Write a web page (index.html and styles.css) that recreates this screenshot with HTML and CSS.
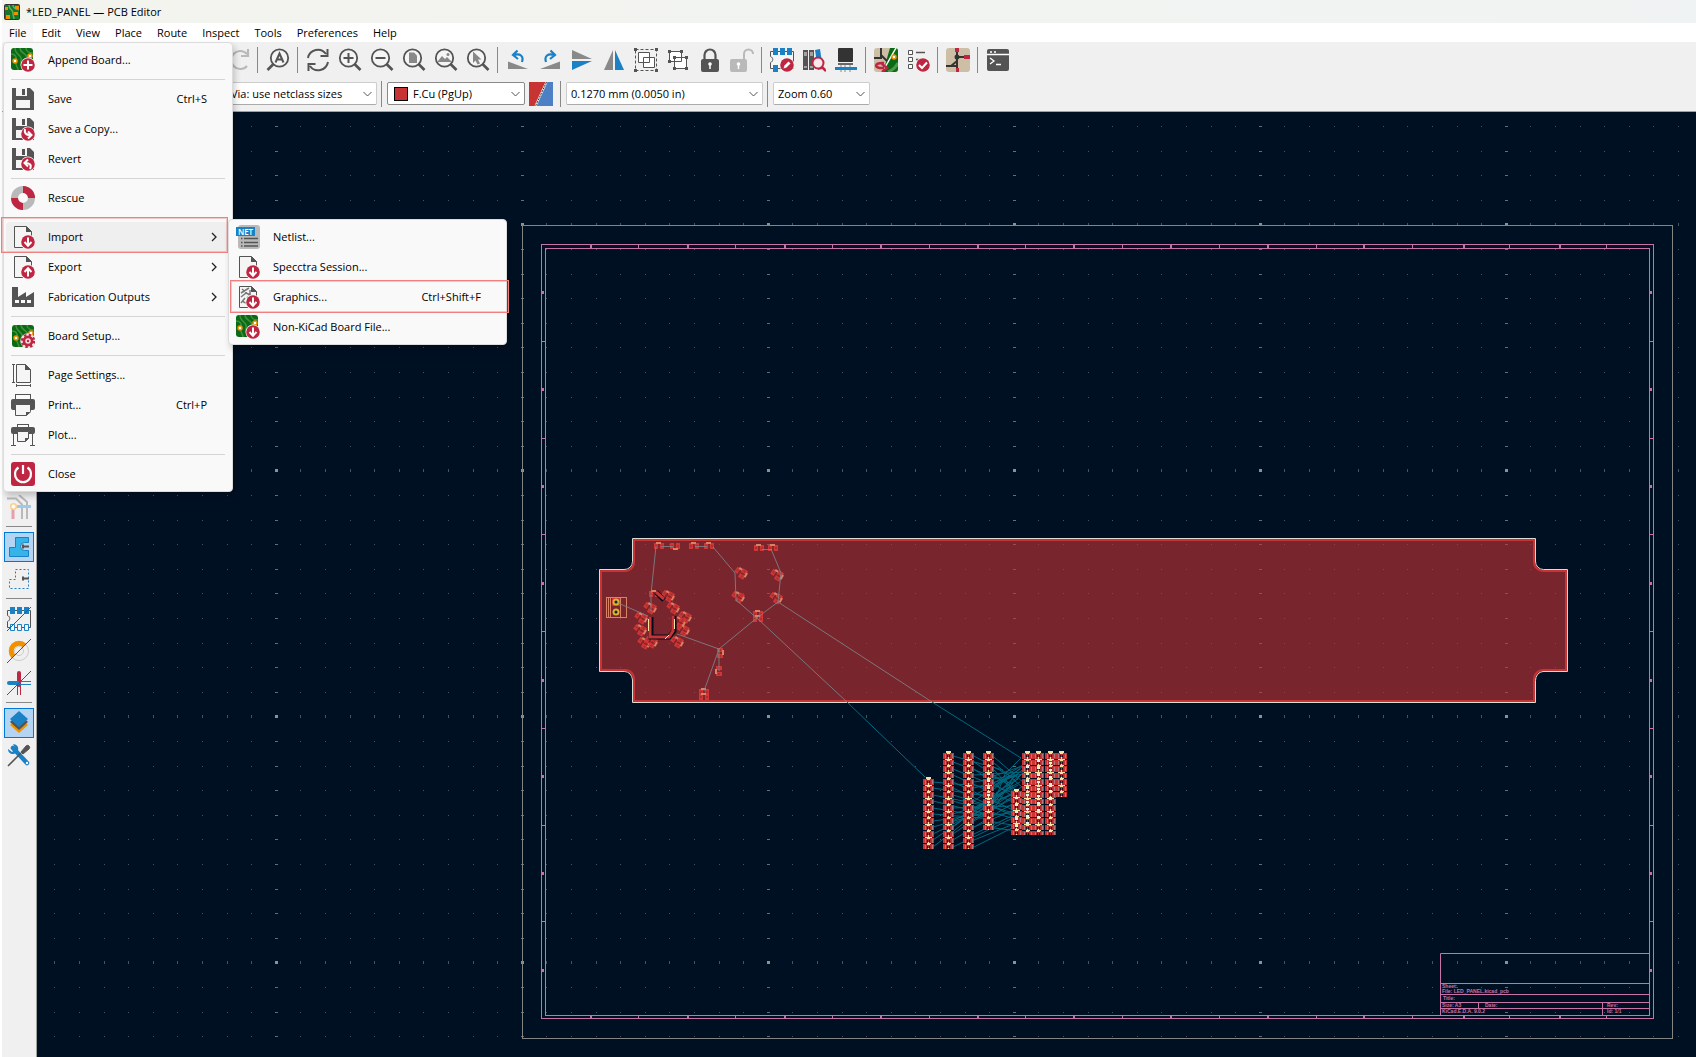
FILE: index.html
```html
<!DOCTYPE html>
<html lang="en">
<head>
<meta charset="utf-8">
<title>*LED_PANEL — PCB Editor</title>
<link rel="stylesheet" href="styles.css">
</head>
<body>
<svg class="sprite" aria-hidden="true">
  <defs>
    <symbol id="pcb" viewBox="0 0 24 24">
      <rect width="22" height="22" rx="3" fill="#0a6b14"/>
      <path d="M4 0C4 8 12 6 10 13S16 18 15 22M9 0c0 6 8 5 7 11s4 5 6 6M0 6c5 0 6 4 5 8s2 5 2 8M15 0c0 3 3 5 7 5" fill="none" stroke="#3f8f3f" stroke-width="1.500"/>
      <circle cx="4" cy="13" r="2" fill="#fff" stroke="#f29100" stroke-width="1.500"/>
      <circle cx="19" cy="8" r="2" fill="#fff" stroke="#f29100" stroke-width="1.500"/>
    </symbol>
    <symbol id="badge" viewBox="0 0 24 24"><circle cx="17" cy="17" r="7.500" fill="#fafafa"/><circle cx="17" cy="17" r="6.800" fill="#bf2641"/></symbol>
    <symbol id="b-down" viewBox="0 0 24 24"><use href="#badge"/><path d="M17 12.500v8M13.500 17l3.500 3.700 3.500-3.700" fill="none" stroke="#fff" stroke-width="2"/></symbol>
    <symbol id="b-up" viewBox="0 0 24 24"><use href="#badge"/><path d="M17 21.500v-8M13.500 17l3.500-3.700 3.500 3.700" fill="none" stroke="#fff" stroke-width="2"/></symbol>
    <symbol id="doc" viewBox="0 0 24 24"><path d="M3.500 1.500h12l5 5v16h-17z" fill="#f5f5f5" stroke="#545454"/><path d="M15 1l6 6h-6z" fill="#545454"/></symbol>
    <symbol id="disk" viewBox="0 0 24 24"><path d="M1 1h18l4 4v18H1z" fill="#545454"/><path d="M5 1h11v8H5zM5 13h14v8H5z" fill="#f5f5f5"/><path d="M11 2h3v6h-3z" fill="#545454"/></symbol>
    <symbol id="append" viewBox="0 0 24 24"><use href="#pcb"/><use href="#badge"/><path d="M17 12.500v9M12.500 17h9" stroke="#fff" stroke-width="2"/></symbol>
    <symbol id="copy" viewBox="0 0 24 24"><use href="#disk"/><use href="#badge"/><path d="M14 12c-1 4 1 6 5 6M17 14.500l3.500 3.500-3.500 3.500" fill="none" stroke="#fff" stroke-width="2"/></symbol>
    <symbol id="revert" viewBox="0 0 24 24"><use href="#disk"/><use href="#badge"/><path d="M19 22c2-4 0-6-5-6M17 12.500l-3.500 3.500 3.500 3.500" fill="none" stroke="#fff" stroke-width="2"/></symbol>
    <symbol id="rescue" viewBox="0 0 24 24"><g fill="none" stroke-width="7"><circle cx="12" cy="12" r="8.500" stroke="#b9b9b9"/><path d="M12 3.500a8.500 8.500 0 0 1 8.500 8.500M12 20.500A8.500 8.500 0 0 1 3.500 12" stroke="#bf2641"/></g></symbol>
    <symbol id="import" viewBox="0 0 24 24"><use href="#doc"/><use href="#b-down"/></symbol>
    <symbol id="export" viewBox="0 0 24 24"><use href="#doc"/><use href="#b-up"/></symbol>
    <symbol id="fab" viewBox="0 0 24 24"><path d="M1 2h6v10l8-5v5l8-5v15H1z" fill="#545454"/><path d="M4 15h4v3H4zM10 15h4v3h-4zM16 15h4v3h-4z" fill="#fafafa"/></symbol>
    <symbol id="setup" viewBox="0 0 24 24"><use href="#pcb" x="1" y="1"/><circle cx="17" cy="17" r="6.500" fill="none" stroke="#f5dfe3" stroke-width="2.500"/><circle cx="17" cy="17" r="4" fill="#f5dfe3" stroke="#bf2641" stroke-width="2.500"/><circle cx="17" cy="17" r="6" fill="none" stroke="#bf2641" stroke-width="2.500" stroke-dasharray="2.400 2.310"/><circle cx="17" cy="17" r="1.200" fill="#bf2641"/></symbol>
    <symbol id="page" viewBox="0 0 24 24"><path d="M5.500 1.500h9l5 5v13h-14z" fill="#f5f5f5" stroke="#545454"/><path d="M14 1l6 6h-6z" fill="#545454"/><path d="M1 1.500h3M1 19.500h3M2.500 1v18M5.500 21v3M19.500 21v3M5 22.500h15" stroke="#545454"/></symbol>
    <symbol id="print" viewBox="0 0 24 24"><rect x="4.500" y="1.500" width="15" height="7" fill="#fafafa" stroke="#545454"/><path d="M2 6h20a2 2 0 0 1 2 2v7a2 2 0 0 1-2 2H2a2 2 0 0 1-2-2V8a2 2 0 0 1 2-2z" fill="#545454"/><path d="M4.500 11.500h15v7l-4 4h-11z" fill="#f5f5f5" stroke="#545454"/><path d="M15 23v-4h5z" fill="#545454"/></symbol>
    <symbol id="plot" viewBox="0 0 24 24"><rect x="6.500" y="1.500" width="11" height="5" fill="#fafafa" stroke="#545454"/><rect y="4" width="24" height="7" rx="2" fill="#545454"/><path d="M2.500 10v12M21.500 10v12M0 22.500h5M19 22.500h5" stroke="#545454"/><path d="M6.500 8.500h11v7l-3 3h-8z" fill="#f5f5f5" stroke="#545454"/><path d="M14 19v-4h4z" fill="#545454"/></symbol>
    <symbol id="close" viewBox="0 0 24 24"><rect width="24" height="24" rx="3" fill="#bf2641"/><path d="M7.500 5.500a8 8 0 1 0 9 0M12 3v9" fill="none" stroke="#fff" stroke-width="2.200"/></symbol>
    <symbol id="net" viewBox="0 0 24 24"><rect x="2" width="22" height="24" rx="3" fill="#b9b9b9"/><path d="M8 13.500h14M8 17.500h14M8 21h14" stroke="#545454" stroke-width="1.500"/><path d="M5 13.500h1.500M5 17.500h1.500M5 21h1.500" stroke="#545454" stroke-width="1.500"/><rect y="2" width="19" height="9" fill="#1a81c4"/><text x="9.500" y="9.500" text-anchor="middle" font-family="Open Sans, sans-serif" font-size="8" font-weight="600" fill="#fff">NET</text></symbol>
    <symbol id="graphics" viewBox="0 0 24 24"><use href="#doc"/><path d="M5 8l8-5M6 4l7 6M5 12l5-4 5 2M7 16a3 3 0 1 0 4-4M5 18l4-5M14 5v5" fill="none" stroke="#777" stroke-width="1.500"/><use href="#b-down"/></symbol>
    <symbol id="nonkicad" viewBox="0 0 24 24"><use href="#pcb"/><use href="#b-down"/></symbol>

    <symbol id="lens" viewBox="0 0 24 24"><circle cx="10.500" cy="10" r="8.700" fill="#f5f5f5" stroke="#545454" stroke-width="1.800"/><path d="M16.500 16l6 6" stroke="#545454" stroke-width="2.600"/></symbol>
    <symbol id="redo" viewBox="0 0 24 24"><path d="M21 6A9 9 0 1 0 21 18M22 1v7h-7" fill="none" stroke="#b9b9b9" stroke-width="2.200"/></symbol>
    <symbol id="find" viewBox="0 0 24 24"><circle cx="13.500" cy="10" r="8.700" fill="#f5f5f5" stroke="#545454" stroke-width="1.800"/><path d="M7.500 16l-6 6" stroke="#545454" stroke-width="2.600"/><path d="M9.500 14.500l4-9 4 9M11 11.500h5" fill="none" stroke="#545454" stroke-width="2"/></symbol>
    <symbol id="refresh" viewBox="0 0 24 24"><path d="M2 10A10 10 0 0 1 20 6M22 14A10 10 0 0 1 4 18M21.500 1v7h-7M2.500 23v-7h7" fill="none" stroke="#545454" stroke-width="2"/></symbol>
    <symbol id="zin" viewBox="0 0 24 24"><use href="#lens"/><path d="M10.500 5v10M5.500 10h10" stroke="#545454" stroke-width="2"/></symbol>
    <symbol id="zout" viewBox="0 0 24 24"><use href="#lens"/><path d="M5.500 10h10" stroke="#545454" stroke-width="2"/></symbol>
    <symbol id="zpage" viewBox="0 0 24 24"><use href="#lens"/><path d="M7 4.500h5l3 3V15H7z" fill="#888"/></symbol>
    <symbol id="zobj" viewBox="0 0 24 24"><use href="#lens"/><path d="M4 13l4-5 3 3 2-2 4 4v1H4z" fill="#888"/><circle cx="14" cy="6.500" r="1.500" fill="#888"/></symbol>
    <symbol id="zsel" viewBox="0 0 24 24"><use href="#lens"/><path d="M7 3.500l8.500 8h-3.500l2 4-2.500 1-2-4-2.500 2.500z" fill="#888"/></symbol>
    <symbol id="rotl" viewBox="0 0 24 24"><path d="M2 13.500V21h20z" fill="#898989"/><path d="M16 14c2-6-2-9-8-7M11.500 2.500L7 7l5 4" fill="none" stroke="#1a81c4" stroke-width="2.200"/></symbol>
    <symbol id="rotr" viewBox="0 0 24 24"><path d="M22 13.500V21H2z" fill="#898989"/><path d="M8 14c-2-6 2-9 8-7M12.500 2.500L17 7l-5 4" fill="none" stroke="#1a81c4" stroke-width="2.200"/></symbol>
    <symbol id="flip" viewBox="0 0 24 24"><path d="M2 2v9h20z" fill="#898989"/><path d="M2 22v-9h20z" fill="#1a81c4"/></symbol>
    <symbol id="mirror" viewBox="0 0 24 24"><path d="M2 22h9V2z" fill="#898989"/><path d="M22 22h-9V2z" fill="#1a81c4"/></symbol>
    <symbol id="group" viewBox="0 0 24 24"><rect x="1.500" y="1.500" width="21" height="21" fill="none" stroke="#545454" stroke-dasharray="3 2"/><path d="M0 0h3v3H0zM21 0h3v3h-3zM0 21h3v3H0zM21 21h3v3h-3z" fill="#545454"/><path d="M4.500 4.500h11v10h-11zM9.500 9.500h11v10h-11z" fill="#fff" stroke="#545454"/></symbol>
    <symbol id="ungroup" viewBox="0 0 24 24"><path d="M3.500 3.500h12v10h-12zM8.500 9.500h12v11h-12z" fill="#fff" stroke="#545454"/><path d="M2 2h3v3H2zM14 2h3v3h-3zM2 12h3v3H2zM7 8h3v3H7zM19 8h3v3h-3zM7 19h3v3H7zM19 19h3v3h-3z" fill="#545454"/></symbol>
    <symbol id="lock" viewBox="0 0 24 24"><path d="M6.500 12V7a5.500 5.500 0 0 1 11 0v5" fill="none" stroke="#545454" stroke-width="2.200"/><rect x="3" y="11" width="18" height="13" rx="2" fill="#545454"/><circle cx="12" cy="16" r="1.800" fill="#fff"/><path d="M12 16v5" stroke="#fff" stroke-width="1.500"/></symbol>
    <symbol id="unlock" viewBox="0 0 24 24"><path d="M14 12V6a4.500 4.500 0 0 1 9 0" fill="none" stroke="#b9b9b9" stroke-width="2"/><rect y="11" width="17" height="13" rx="2" fill="#b9b9b9"/><circle cx="8.500" cy="16" r="1.800" fill="#fff"/><path d="M8.500 16v5" stroke="#fff" stroke-width="1.500"/></symbol>
    <symbol id="fpedit" viewBox="0 0 24 24"><path d="M.5 3.500h23v17H.5v-6c3-1 3-5 0-6z" fill="#f5f5f5" stroke="#545454"/><path d="M3 0h5v7H3zM10 0h5v7h-5zM17 0h5v7h-5zM3 17h5v7H3z" fill="#1a81c4"/><use href="#badge"/><path d="M13.500 20.500l1-3 4-4 2 2-4 4z" fill="#fff"/></symbol>
    <symbol id="fplib" viewBox="0 0 24 24"><path d="M1 2h5v20H1zM7 2h5v20H7z" fill="#545454"/><path d="M13 2l5-1 3 20-5 1z" fill="#1a81c4"/><path d="M2 5h3M2 7h3M8 5h3M8 7h3M2 19h3M8 19h3" stroke="#f0f0f0"/><circle cx="16" cy="15" r="5.500" fill="#f7e9ec" stroke="#bf2641" stroke-width="2"/><path d="M20 19l4 4" stroke="#bf2641" stroke-width="2.500"/></symbol>
    <symbol id="view3d" viewBox="0 0 24 24"><rect x="4" width="15" height="14" rx="1" fill="#333"/><path d="M4 15h15v2H4z" fill="#666"/><path d="M7 17v7M11 17v7M16 17v7" stroke="#888"/><path d="M1 19h22v3H1z" fill="#1a81c4"/></symbol>
    <symbol id="update" viewBox="0 0 24 24"><rect width="24" height="24" rx="3" fill="#cdbfa6"/><path d="M16 0h5a3 3 0 0 1 3 3v18a3 3 0 0 1-3 3H9z" fill="#0a6b14"/><path d="M14 24c6-2 8-5 10-9" stroke="#4d9a4d" stroke-width="3" fill="none"/><path d="M22 0L10 21" stroke="#fff" stroke-width="1.500"/><path d="M0 10h7V0M7 7l6 6" stroke="#333" stroke-width="2" fill="none"/><circle cx="20" cy="9" r="2" fill="#fff" stroke="#f29100" stroke-width="1.500"/><path d="M10 15c-10-1-11 6 0 5M8 16l5 4-5 4" fill="none" stroke="#bf2641" stroke-width="2.500"/></symbol>
    <symbol id="drc" viewBox="0 0 24 24"><path d="M2.500 2.500h4v4h-4zM2.500 9.500h4v4h-4zM2.500 16.500h4v4h-4z" fill="#fff" stroke="#545454"/><path d="M10 4.500h9M10 11.500h7" stroke="#545454" stroke-width="1.500"/><use href="#badge"/><path d="M13 17l3 3 5-5.500" fill="none" stroke="#fff" stroke-width="2"/></symbol>
    <symbol id="sch" viewBox="0 0 24 24"><rect width="24" height="24" rx="3" fill="#cdbfa6"/><path d="M11 0v18M11 9h13M0 18h11M11 13l-6 5M11 18v6" stroke="#333" stroke-width="2" fill="none"/><circle cx="11" cy="9" r="2.500" fill="#333"/><path d="M9 0h4v4H9zM18 7h6v4h-6zM10 20h3v4h-3z" fill="#bf2641"/></symbol>
    <symbol id="console" viewBox="0 0 24 24"><rect x="1" y="1" width="22" height="22" rx="2" fill="#545454"/><path d="M1 6.500h22M4 4h2M8 4h2M4 10l4 3-4 3M10 16.500h5" fill="none" stroke="#fff" stroke-width="1.300"/></symbol>

    <symbol id="tracks" viewBox="0 0 24 24"><path d="M0 3.500h9l6 6V24M12 0l8 7v17" fill="none" stroke="#b9b9b9" stroke-width="2"/><path d="M6 14v10" stroke="#e6a0ad" stroke-width="3"/><path d="M9 11.500h15" stroke="#9bcbea" stroke-width="3"/><circle cx="6.500" cy="11.500" r="2.800" fill="#fff" stroke="#fad08c" stroke-width="1.600"/></symbol>
    <symbol id="zonefill" viewBox="0 0 24 24"><path d="M2.500 12.500h6v-10h13v5h-4a4 4 0 0 0 0 8h4v6h-19z" fill="#35b4ea" stroke="#1a81c4"/><path d="M15 9.500h2v1h5v2h-5v1h-2z" fill="#545454"/></symbol>
    <symbol id="zoneline" viewBox="0 0 24 24"><path d="M2.500 12.500h6v-10h13v19h-19z" fill="none" stroke="#1a81c4" stroke-dasharray="2 2"/><path d="M15 9.500h2v1h5v2h-5v1h-2z" fill="#545454"/></symbol>
    <symbol id="padoutline" viewBox="0 0 24 24"><path d="M.5 3.500h23v17H.5v-6c3-1 3-5 0-6z" fill="none" stroke="#545454"/><path d="M3 0h5v7H3zM10 0h5v7h-5zM17 0h5v7h-5z" fill="#1a81c4"/><path d="M3.500 17.500h4v6h-4zM10.500 17.500h4v6h-4zM17.500 17.500h4v6h-4z" fill="#f5f5f5" stroke="#1a81c4"/><path d="M24 0L0 24" stroke="#545454"/></symbol>
    <symbol id="viaoutline" viewBox="0 0 24 24"><circle cx="12" cy="12" r="9.500" fill="none" stroke="#ccc"/><circle cx="12" cy="12" r="4.500" fill="none" stroke="#ccc"/><path d="M6.500 17.500A7.500 7.500 0 0 1 17.500 6.500" fill="none" stroke="#f29100" stroke-width="5"/><path d="M24 0L0 24" stroke="#545454"/></symbol>
    <symbol id="trackoutline" viewBox="0 0 24 24"><path d="M12 2v12" stroke="#bf2641" stroke-width="4" stroke-linecap="round"/><path d="M2 12h9" stroke="#1a81c4" stroke-width="4" stroke-linecap="round"/><path d="M10.500 13v11M13.500 13v11" stroke="#bf2641"/><path d="M13 10.500h11M13 13.500h11" stroke="#1a81c4"/><path d="M24 0L0 24" stroke="#545454"/></symbol>
    <symbol id="layers" viewBox="0 0 24 24"><path d="M3 14l9 8 9-8-3-3-6 5-6-5z" fill="#f29100"/><path d="M3 11l9 8 9-8-3-3H6z" fill="#545454"/><path d="M12 0l9 8-9 8-9-8z" fill="#1a81c4"/></symbol>
    <symbol id="tools" viewBox="0 0 24 24"><path d="M6 5l14 15" stroke="#1a81c4" stroke-width="4.500" stroke-linecap="round"/><path d="M6 1l3 5-4 3-4-3c0 5 5 6 8 4s4-8-3-9z" fill="#1a81c4"/><circle cx="20" cy="20" r="1.200" fill="#fff"/><path d="M1 23L14 10" stroke="#545454" stroke-width="1.600"/><path d="M14 9l5-6c2-2 5 1 3 3l-6 5z" fill="#545454" stroke="#545454"/></symbol>
    <symbol id="chev" viewBox="0 0 9 6"><path d="M.5 1l4 4 4-4" fill="none" stroke="#555"/></symbol>
    <symbol id="arrow" viewBox="0 0 6 10"><path d="M1 1l4 4-4 4" fill="none" stroke="#222" stroke-width="1.300"/></symbol>

    <path id="dots" d="M25 1.500h1M50 1.500h1M75 1.500h1M99 1.500h1M124 1.500h1M148 1.500h1M173 1.500h1M198 1.500h1M222 1.500h1" stroke="#48535e"/>
    <g id="dotrow"><use href="#dots"/><path d="M0 1.500h3" stroke="#666d73"/></g>
    <pattern id="grid" patternUnits="userSpaceOnUse" x="275" y="223" width="246" height="246">
      <path d="M0 1.500h3" stroke="#8f9090" stroke-width="3"/>
      <use href="#dots" stroke-width="3"/>
      <use href="#dotrow" y="25"/><use href="#dotrow" y="50"/><use href="#dotrow" y="74"/><use href="#dotrow" y="99"/><use href="#dotrow" y="123"/><use href="#dotrow" y="148"/><use href="#dotrow" y="173"/><use href="#dotrow" y="197"/><use href="#dotrow" y="222"/>
    </pattern>
    <g id="fp">
      <path d="M-5-3h4v6h-4zM1-3h4v6H1z" fill="#d03636"/>
      <path d="M-1-1h2v3h-2z" fill="#8a2529"/>
      <path d="M-4-1h2v2h-2zM2-1h2v2H2z" fill="#a83034"/>
      <path d="M-3-4h5v2h-5z" fill="#d98264"/>
    </g>
    <g id="fp2"><use href="#fp" transform="rotate(35)"/><use href="#fp" transform="translate(3 2) rotate(120)"/></g>
    <pattern id="led" patternUnits="userSpaceOnUse" width="11" height="13">
      <path d="M0 0h4v6H0zM7 0h4v6H7zM0 7h4v5H0zM7 7h4v5H7z" fill="#cc3434"/>
      <path d="M3 0h5v6H3zM3 7h5v5H3z" fill="#b02c30"/>
      <path d="M2 1h1v4H2zM9 1h1v4H9zM2 8h1v4H2zM9 8h1v4H9z" fill="#b5777a"/>
      <path d="M4 2h1v2H4zM6 2h1v2H6zM4 9h1v2H4zM6 9h1v2H6z" fill="#18141f"/>
      <path d="M2 6h7v1H2zM4 12h4v1H4zM5 4h1v3H5zM5 11h1v2H5zM4 0h3v1H4zM4 7h3v1H4z" fill="#f2e6a4"/>
    </pattern>
    <g id="ticks"><path d="M638.500 0v4M735.500 0v4M832.500 0v4M929.500 0v4M1025.500 0v4M1122.500 0v4M1219.500 0v4M1316.500 0v4M1412.500 0v4M1509.500 0v4M1606.500 0v4"/><path stroke-width="2" d="M591 0v4M688 0v4M785 0v4M881 0v4M978 0v4M1074 0v4M1171 0v4M1268 0v4M1364 0v4M1464 0v4M1560 0v4"/></g>
    <g id="vticks"><path d="M0 341.500h4M0 438.500h4M0 534.500h4M0 631.500h4M0 728.500h4M0 825.500h4M0 921.500h4"/><path stroke-width="3" d="M1 292.500h2M1 389.500h2M1 486.500h2M1 583.500h2M1 680.500h2M1 776.500h2M1 873.500h2M1 970.500h2"/></g>
  </defs>
</svg>

<div class="window">
  <header class="titlebar">
    <svg class="appicon" viewBox="0 0 16 16"><rect width="16" height="16" rx="2" fill="#333"/><rect x="1" y="1" width="14" height="14" fill="#16782a"/><path d="M5 1c0 5 4 4 4 8s1 4 1 6M9 1c0 4 4 4 6 5" fill="none" stroke="#5db45d" stroke-width="1.500"/><path d="M1 3h3v3H1zM11 2h4v3h-4zM2 11h4v4H2zM10 8h4v3h-4z" fill="#f29100"/></svg>
    <span>*LED_PANEL — PCB Editor</span>
  </header>
  <nav class="menubar">
    <button class="open">File</button><button>Edit</button><button>View</button><button>Place</button><button>Route</button><button>Inspect</button><button>Tools</button><button>Preferences</button><button>Help</button>
  </nav>

  <div class="toolbars">
    <div class="toolbar">
      <button aria-label="Redo"><svg><use href="#redo"/></svg></button><i class="sep"></i>
      <button aria-label="Find"><svg><use href="#find"/></svg></button><i class="sep"></i>
      <button aria-label="Refresh"><svg><use href="#refresh"/></svg></button>
      <button aria-label="Zoom in"><svg><use href="#zin"/></svg></button>
      <button aria-label="Zoom out"><svg><use href="#zout"/></svg></button>
      <button aria-label="Zoom to page"><svg><use href="#zpage"/></svg></button>
      <button aria-label="Zoom to objects"><svg><use href="#zobj"/></svg></button>
      <button aria-label="Zoom to selection"><svg><use href="#zsel"/></svg></button><i class="sep"></i>
      <button aria-label="Rotate left"><svg><use href="#rotl"/></svg></button>
      <button aria-label="Rotate right"><svg><use href="#rotr"/></svg></button>
      <button aria-label="Flip"><svg><use href="#flip"/></svg></button>
      <button aria-label="Mirror"><svg><use href="#mirror"/></svg></button>
      <button aria-label="Group"><svg><use href="#group"/></svg></button>
      <button aria-label="Ungroup"><svg><use href="#ungroup"/></svg></button>
      <button aria-label="Lock"><svg><use href="#lock"/></svg></button>
      <button aria-label="Unlock"><svg><use href="#unlock"/></svg></button><i class="sep"></i>
      <button aria-label="Footprint editor"><svg><use href="#fpedit"/></svg></button>
      <button aria-label="Footprint browser"><svg><use href="#fplib"/></svg></button>
      <button aria-label="3D viewer"><svg><use href="#view3d"/></svg></button><i class="sep"></i>
      <button aria-label="Update from schematic"><svg><use href="#update"/></svg></button>
      <button aria-label="Design rules check"><svg><use href="#drc"/></svg></button><i class="sep"></i>
      <button aria-label="Schematic editor"><svg><use href="#sch"/></svg></button><i class="sep"></i>
      <button aria-label="Scripting console"><svg><use href="#console"/></svg></button>
    </div>
    <div class="options">
      <span class="combo via"><select aria-label="Via size"><option>Via: use netclass sizes</option></select><svg><use href="#chev"/></svg></span><i class="sep"></i>
      <span class="combo layer"><i class="swatch"></i><select aria-label="Layer"><option>F.Cu (PgUp)</option></select><svg><use href="#chev"/></svg></span>
      <button class="pair" aria-label="Layer pair"><svg viewBox="0 0 24 24"><path d="M0 0h17L6 24H0z" fill="#c83434"/><path d="M17 0h7v24H6z" fill="#4d7fc4"/><path d="M17.500 0l-11 24" stroke="#eee" stroke-width="2"/><path d="M17.500 0l-11 24" stroke="#333" stroke-width="1" stroke-dasharray="2 1"/></svg></button><i class="sep"></i>
      <span class="combo gridsize"><select aria-label="Grid"><option>0.1270 mm (0.0050 in)</option></select><svg><use href="#chev"/></svg></span><i class="sep"></i>
      <span class="combo zoom"><select aria-label="Zoom"><option>Zoom 0.60</option></select><svg><use href="#chev"/></svg></span>
    </div>
  </div>

  <main class="work">
    <aside class="sidebar">
      <button aria-label="Net highlighting"><svg><use href="#tracks"/></svg></button><i class="hsep"></i>
      <button class="on" aria-label="Filled zones"><svg><use href="#zonefill"/></svg></button>
      <button aria-label="Zone outlines"><svg><use href="#zoneline"/></svg></button><i class="hsep"></i>
      <button aria-label="Pad outlines"><svg><use href="#padoutline"/></svg></button>
      <button aria-label="Via outlines"><svg><use href="#viaoutline"/></svg></button>
      <button aria-label="Track outlines"><svg><use href="#trackoutline"/></svg></button><i class="hsep"></i>
      <button class="on" aria-label="Layers manager"><svg><use href="#layers"/></svg></button>
      <button aria-label="Properties"><svg><use href="#tools"/></svg></button>
    </aside>
    <svg class="canvas" viewBox="37 112 1659 945" preserveAspectRatio="xMinYMin slice">
      <rect x="37" y="112" width="1659" height="945" fill="#001023"/>
      <rect x="37" y="112" width="1659" height="945" fill="url(#grid)"/>
      <rect x="522.500" y="225.500" width="1150" height="813" fill="none" stroke="#848484"/>
      <g fill="none" stroke="#c872a8">
        <rect x="541.500" y="244.500" width="1112" height="774"/>
        <rect x="545.500" y="248.500" width="1104" height="767"/>
        <use href="#ticks" y="244"/><use href="#ticks" y="1015"/>
        <use href="#vticks" x="541"/><use href="#vticks" x="1649"/>
        <path d="M1440.500 1015V953.500H1649M1440 983.500h209M1440 994.500h209M1440 1002.500h209M1440 1008.500h209M1478.500 1002v6M1602.500 1002v13"/>
      </g>
      <g class="tiny">
        <text x="1442" y="988">Sheet:</text><text x="1442" y="993">File: LED_PANEL.kicad_pcb</text><text x="1443" y="1000">Title:</text>
        <text x="1442" y="1007">Size: A3</text><text x="1485" y="1007">Date:</text><text x="1607" y="1007">Rev:</text>
        <text x="1442" y="1013">KiCad E.D.A. 9.0.2</text><text x="1607" y="1013">Id: 1/1</text>
      </g>

      <path fill="#c83434" fill-opacity=".6" stroke="#dcdcd6" d="M632.500 538.500H1535.500V561a8 8 0 0 0 8 8.500H1567.500V671.500H1543a8 9 0 0 0-7.500 9V702.500H632.500V680a8 9 0 0 0-8-8.500H599.500V569.500H624a8 8 0 0 0 8.500-8z"/>
      <path fill="none" stroke="#c83434" stroke-width="2" d="M634 540H1534V562a9 9 0 0 0 9 9H1566V670H1543a9 9 0 0 0-9 9V701H634V680a9 9 0 0 0-9-10H601V571H624a9 9 0 0 0 10-9z"/>

      <g fill="none" stroke="#d98264"><rect x="606.500" y="597.500" width="20" height="20"/><path d="M608.500 597v20M610.500 597v20M620.500 597v20"/></g>
      <rect x="612" y="598" width="8" height="8" fill="#c83434"/>
      <g stroke="#e0b030" stroke-width="2" fill="#062a30"><circle cx="616" cy="602" r="2.500"/><circle cx="616" cy="612" r="2.500"/></g>

      <use href="#fp" x="659" y="546"/><use href="#fp" transform="translate(675 546) rotate(180)"/><use href="#fp" x="694" y="546"/><use href="#fp" x="709" y="546"/>
      <use href="#fp" x="759" y="548"/><use href="#fp" x="773" y="548"/>
      <use href="#fp2" x="740" y="572"/><use href="#fp2" x="737" y="596"/><use href="#fp2" x="776" y="574"/><use href="#fp2" x="775" y="597"/>
      <use href="#fp" x="758" y="614"/><use href="#fp" x="758" y="619"/>
      <use href="#fp" transform="translate(720 653) rotate(90)"/><use href="#fp" transform="translate(719 671) rotate(-90)"/>
      <use href="#fp" x="704" y="692"/><use href="#fp" x="704" y="697"/>
      <use href="#fp" x="654" y="594"/><use href="#fp2" x="667" y="595"/><use href="#fp2" x="649" y="607"/><use href="#fp2" x="672" y="607"/>
      <use href="#fp2" x="640" y="617"/><use href="#fp2" x="639" y="629"/><use href="#fp2" x="643" y="642"/><use href="#fp2" x="650" y="641"/>
      <use href="#fp2" x="684" y="616"/><use href="#fp2" x="682" y="629"/><use href="#fp2" x="676" y="641"/><use href="#fp2" x="678" y="621"/>
      <path fill="none" stroke="#000d1c" stroke-width="5" d="M651 617v20h18l5-6v-15M656 592l8 8"/>
      <path fill="none" stroke="#c83434" stroke-width="3" d="M650 617v20h19l4-6v-15M656 592l8 7"/>
      <path d="M648.500 619v12M674.500 619v10M669 635l-4 4" stroke="#f2e6a4"/>

      <path class="rat-in" d="M656 546l-5 48v18M661 546.500h12M695 546.500h12M713 547l22 26 1 27 23 20 88 82M618 603l30 13M677 634l42 15 39-32 20-15 154 100M771 549l10 24-3 29M762 549.500h10M719 649v22M719 649l-15 42"/>
      <path class="rat" d="M932 702l89 56M847 702l78 75"/>

      <path class="rat" d="M933 782l56 5M933 788l55 8M933 795l60 12M933 801l58 14M933 808l60 10M933 814l60 5M933 821l60-8M933 827l60-17M933 834l60-30M933 840l70-48M933 847l80-62M953 756l50 14M953 762l60 22M953 769l60 24M953 775l60 27M953 782l60 28M953 788l60 28M953 795l60 18M953 801l62 18M953 808l60-2M953 814l62-20M953 821l65-36M953 827l70-54M953 834l70-48M953 840l62-38M953 847l62-30M974 756l40 22M974 762l42 28M974 769l42 30M974 775l50-3M974 782l50-8M974 788l42-12M974 795l44-21M974 801l46-32M974 808l46-26M974 814l44-24M974 821l46-29M974 827l42-18M974 834l42-20M974 840l42-17M974 847l50-25M994 757l30 26M994 763l28 24M994 770l28 30M994 776l28-10M994 783l32-20M994 789l28-22M994 796l28-26M994 802l28-28M994 809l24-14M994 815l24-3M994 822l24 4M994 828l24 3M1021 758l-16 16-10 26M1014 776l-18 30M1005 778l8 16M1016 772l-20 12M1018 779l-22 14"/>
      <g class="ledstrip">
        <g transform="translate(923 779)"><rect width="11" height="70"/><path d="M3-2h5v2H3z"/></g>
        <g transform="translate(943 753)"><rect width="11" height="96"/><path d="M3-2h5v2H3z"/></g>
        <g transform="translate(963 753)"><rect width="11" height="96"/><path d="M3-2h5v2H3z"/></g>
        <g transform="translate(983 753)"><rect width="11" height="77"/><path d="M3-2h5v2H3z"/></g>
        <g transform="translate(1022 753)"><rect width="11" height="82"/><path d="M3-2h5v2H3z"/></g>
        <g transform="translate(1033 753)"><rect width="11" height="82"/><path d="M3-2h5v2H3z"/></g>
        <g transform="translate(1045 753)"><rect width="11" height="82"/><path d="M3-2h5v2H3z"/></g>
        <g transform="translate(1056 753)"><rect width="11" height="44"/><path d="M3-2h5v2H3z"/></g>
        <g transform="translate(1011 791)"><rect width="11" height="44"/><path d="M3-2h5v2H3z"/></g>
      </g>
      <path d="M988.500 773v30M1016.500 797v30M1027.500 766v60M1038.500 760v60M1050.500 762v40" stroke="#dff5e6" stroke-width="3" stroke-dasharray="2 5"/>
    </svg>
  </main>

  <div class="popup filemenu" role="menu">
    <button class="item"><svg><use href="#append"/></svg><span>Append Board...</span></button><hr>
    <button class="item"><svg><use href="#disk"/></svg><span>Save</span><kbd>Ctrl+S</kbd></button>
    <button class="item"><svg><use href="#copy"/></svg><span>Save a Copy...</span></button>
    <button class="item"><svg><use href="#revert"/></svg><span>Revert</span></button><hr>
    <button class="item"><svg><use href="#rescue"/></svg><span>Rescue</span></button><hr>
    <button class="item hover"><svg><use href="#import"/></svg><span>Import</span><svg class="more"><use href="#arrow"/></svg></button>
    <button class="item"><svg><use href="#export"/></svg><span>Export</span><svg class="more"><use href="#arrow"/></svg></button>
    <button class="item"><svg><use href="#fab"/></svg><span>Fabrication Outputs</span><svg class="more"><use href="#arrow"/></svg></button><hr>
    <button class="item"><svg><use href="#setup"/></svg><span>Board Setup...</span></button><hr>
    <button class="item"><svg><use href="#page"/></svg><span>Page Settings...</span></button>
    <button class="item"><svg><use href="#print"/></svg><span>Print...</span><kbd>Ctrl+P</kbd></button>
    <button class="item"><svg><use href="#plot"/></svg><span>Plot...</span></button><hr>
    <button class="item"><svg><use href="#close"/></svg><span>Close</span></button>
  </div>
  <div class="popup submenu" role="menu">
    <button class="item"><svg><use href="#net"/></svg><span>Netlist...</span></button>
    <button class="item"><svg><use href="#import"/></svg><span>Specctra Session...</span></button>
    <button class="item"><svg><use href="#graphics"/></svg><span>Graphics...</span><kbd>Ctrl+Shift+F</kbd></button>
    <button class="item"><svg><use href="#nonkicad"/></svg><span>Non-KiCad Board File...</span></button>
  </div>
  <div class="mark mark-import"></div>
  <div class="mark mark-graphics"></div>
</div>
</body>
</html>
```
FILE: styles.css
```css
* { box-sizing: border-box; }
body { margin: 0; font: 11px/16px "Open Sans", "Noto Sans", sans-serif; color: #000; background: #fff; }
button, select { font: inherit; color: inherit; border: 0; padding: 0; background: none; }
.sprite { position: absolute; width: 0; height: 0; }

.window { position: relative; display: flex; flex-direction: column; min-height: 100vh; padding-left: 2px; }

.titlebar { display: flex; align-items: center; gap: 6px; height: 23px; padding-left: 2px; background: linear-gradient(90deg, #f3f4ee, #f0f3f3); }
.appicon { width: 16px; height: 16px; }

.menubar { display: flex; gap: 1px; height: 19px; background: #fff; }
.menubar button { padding: 0 7px; }
.menubar .open { background: #f8f8f8; }

.toolbars { height: 70px; background: #f0f0f0; border-bottom: 1px solid #a0a0a0; }
.toolbar { display: flex; align-items: center; height: 35px; padding-left: 220px; }
.toolbar button { display: grid; place-items: center; width: 32px; height: 32px; }
.toolbar svg { width: 24px; height: 24px; }
.sep { height: 26px; border-left: 1px solid #888; }
.toolbar .sep { width: 5px; margin-left: 3px; }

.options { display: flex; align-items: center; height: 33px; padding-left: 224px; }
.options .sep { width: 6px; margin-left: 4px; }
.combo { position: relative; display: flex; height: 23px; background: #fff; border: 1px solid #ccc; border-bottom-color: #aaa; border-radius: 2px; }
.combo select { appearance: none; flex: 1; padding: 0 20px 0 4px; outline: 0; }
.combo svg { position: absolute; right: 4px; top: 8px; width: 9px; height: 6px; pointer-events: none; }
.via { width: 151px; }
.layer { width: 138px; border-color: #8a8a8a; align-items: center; }
.layer select { padding-left: 5px; height: 21px; }
.swatch { width: 14px; height: 14px; margin-left: 6px; border: 1px solid #000; background: #c83434; }
.gridsize { width: 197px; }
.zoom { width: 97px; }
.pair { width: 24px; height: 24px; margin: 0 3px 0 4px; }
.pair svg { display: block; width: 24px; height: 24px; }

.work { flex: 1; display: flex; min-height: 0; }
.sidebar { flex: none; display: flex; flex-direction: column; width: 35px; padding: 379px 0 0 2px; background: #f0f0f0; border-right: 1px solid #a0a0a0; }
.sidebar button { display: grid; place-items: center; width: 30px; height: 30px; margin: 1px 0; }
.sidebar .on { background: #b3d5f3; border: 1px solid #0078d7; }
.sidebar button svg { width: 24px; height: 24px; }
.hsep { width: 26px; height: 5px; margin: 3px 0 0 2px; border-top: 1px solid #888; }
.canvas { flex: 1; min-width: 0; height: calc(100vh - 112px); display: block; }
.rat { fill: none; stroke: #00697f; }
.rat-in { fill: none; stroke: #7f8a90; stroke-opacity: .8; }
.ledstrip rect { fill: url(#led); }
.ledstrip path { fill: #f2e6a4; }
.tiny { font: bold 5px/5px "Liberation Sans", sans-serif; fill: #c872a8; }

.popup { position: absolute; padding: 2px; background: #f9f9f9; border: 1px solid #dcdcdc; border-radius: 4px; box-shadow: 2px 4px 6px rgba(0, 0, 0, .2); }
.filemenu { left: 3px; top: 42px; width: 230px; }
.submenu { left: 228px; top: 219px; width: 279px; }
.item { display: flex; align-items: center; width: 100%; height: 30px; padding: 0 23px 0 5px; border-radius: 4px; text-align: left; }
.item > svg:first-child { width: 24px; height: 24px; margin-right: 13px; }
.item kbd { margin-left: auto; font: inherit; }
.item .more { width: 6px; height: 10px; margin: 0 -10px 0 auto; }
.hover { background: #efefef; }
.popup hr { height: 1px; margin: 4px 5px; border: 0; background: #d5d5d5; }
.mark { position: absolute; border: 1px solid #f08080; box-shadow: inset 0 0 0 1px rgba(240, 128, 128, .4); pointer-events: none; }
.mark-import { left: 1px; top: 217px; width: 227px; height: 36px; }
.mark-graphics { left: 230px; top: 280px; width: 279px; height: 33px; }
```
